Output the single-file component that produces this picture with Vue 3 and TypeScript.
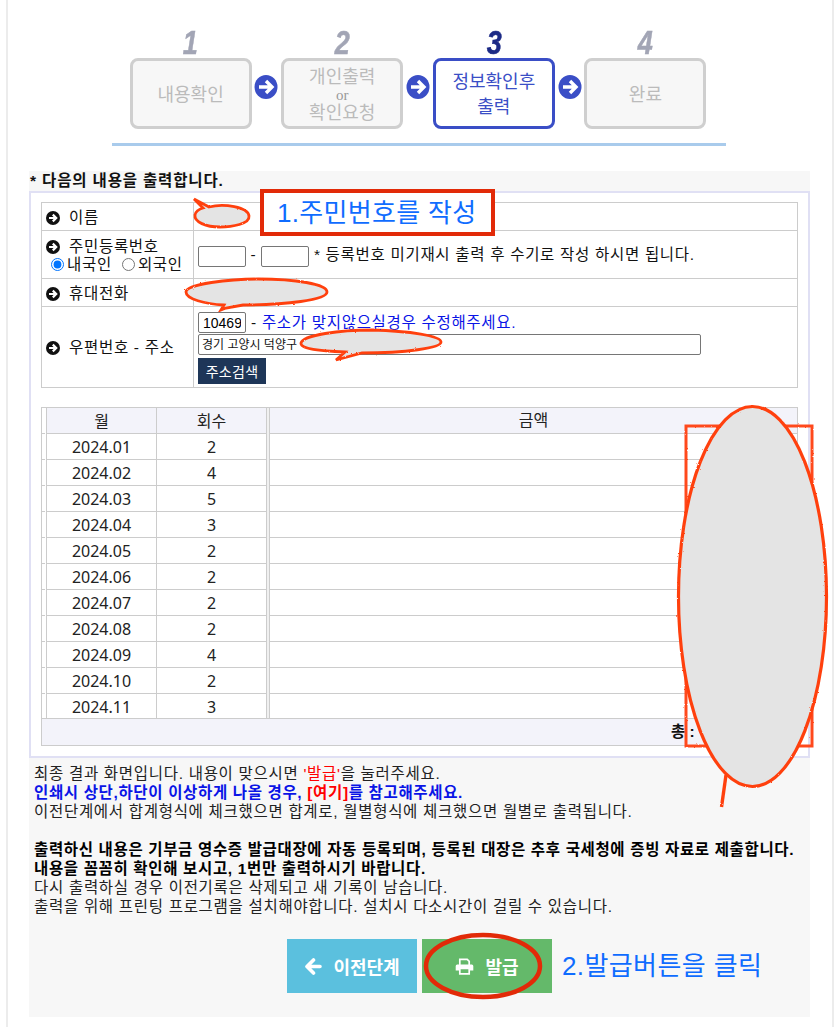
<script setup lang="ts">
const steps = [
  { n: '1', lines: ['내용확인'], cur: false },
  { n: '2', lines: ['개인출력', 'or', '확인요청'], cur: false },
  { n: '3', lines: ['정보확인후', '출력'], cur: true },
  { n: '4', lines: ['완료'], cur: false },
]
const rows = [
  ['2024.01', 2], ['2024.02', 4], ['2024.03', 5], ['2024.04', 3], ['2024.05', 2], ['2024.06', 2],
  ['2024.07', 2], ['2024.08', 2], ['2024.09', 4], ['2024.10', 2], ['2024.11', 3],
]
</script>

<template>
  <div class="page">
    <div class="stepper">
      <div class="steps">
        <template v-for="(s, i) in steps" :key="s.n">
          <div class="step">
            <div class="num" :class="{ curnum: s.cur }">{{ s.n }}</div>
            <div class="box" :class="{ cur: s.cur }">
              <span v-for="l in s.lines" :key="l" :class="{ or: l === 'or' }">{{ l }}</span>
            </div>
          </div>
          <svg v-if="i < 3" class="arrow" viewBox="0 0 24 24" width="24" height="24">
            <ellipse cx="12" cy="12" rx="11.5" ry="12" fill="#3a4ec6" />
            <path d="M5 12h12M12 6l6 6-6 6" fill="none" stroke="#fff" stroke-width="3.4" />
          </svg>
        </template>
      </div>
      <div class="rule"></div>
    </div>

    <div class="panel">
      <div class="head">* 다음의 내용을 출력합니다.</div>
      <div class="frame">
        <table class="form">
          <tbody>
            <tr class="r1">
              <th><span class="bul"><svg viewBox="0 0 14 14"><circle cx="7" cy="7" r="7" fill="#111" /><path d="M3 7h7M6.8 3.6 10.2 7 6.8 10.4" stroke="#fff" stroke-width="2.2" fill="none" /></svg></span>이름</th>
              <td></td>
            </tr>
            <tr class="r2">
              <th>
                <span class="bul"><svg viewBox="0 0 14 14"><circle cx="7" cy="7" r="7" fill="#111" /><path d="M3 7h7M6.8 3.6 10.2 7 6.8 10.4" stroke="#fff" stroke-width="2.2" fill="none" /></svg></span>주민등록번호
                <div class="radios">
                  <label><input type="radio" name="k" checked />내국인</label>
                  <label><input type="radio" name="k" />외국인</label>
                </div>
              </th>
              <td class="idcell">
                <input class="idbox" type="text" />
                <span class="dash">-</span>
                <input class="idbox" type="text" />
                <span class="note">* 등록번호 미기재시 출력 후 수기로 작성 하시면 됩니다.</span>
              </td>
            </tr>
            <tr class="r1">
              <th><span class="bul"><svg viewBox="0 0 14 14"><circle cx="7" cy="7" r="7" fill="#111" /><path d="M3 7h7M6.8 3.6 10.2 7 6.8 10.4" stroke="#fff" stroke-width="2.2" fill="none" /></svg></span>휴대전화</th>
              <td></td>
            </tr>
            <tr class="r4">
              <th><span class="bul"><svg viewBox="0 0 14 14"><circle cx="7" cy="7" r="7" fill="#111" /><path d="M3 7h7M6.8 3.6 10.2 7 6.8 10.4" stroke="#fff" stroke-width="2.2" fill="none" /></svg></span>우편번호 - 주소</th>
              <td class="addr">
                <div class="zipline">
                  <input class="zip" type="text" value="10469" />
                  <span class="ziptext">- <span class="blue">주소가 맞지않으실경우 수정해주세요.</span></span>
                </div>
                <input class="addrbox" type="text" value="경기 고양시 덕양구" />
                <button class="search">주소검색</button>
              </td>
            </tr>
          </tbody>
        </table>

        <div class="grid">
          <div class="gridbody">
            <div class="left">
              <table class="months">
                <thead><tr><th class="gut"></th><th class="c1">월</th><th class="c2">회수</th></tr></thead>
                <tbody>
                  <tr v-for="r in rows" :key="r[0]"><td class="gut"></td><td>{{ r[0] }}</td><td>{{ r[1] }}</td></tr>
                </tbody>
              </table>
            </div>
            <div class="right">
              <div class="righthead">금액</div>
              <div v-for="r in rows" :key="r[0]" class="rightrow"></div>
            </div>
          </div>
          <div class="total">총 :</div>
        </div>
      </div>

      <div class="notes">
        <p>최종 결과 화면입니다. 내용이 맞으시면 <span class="red">'발급'</span>을 눌러주세요.</p>
        <p class="strongblue">인쇄시 상단,하단이 이상하게 나올 경우, <span class="red">[여기]</span>를 참고해주세요.</p>
        <p>이전단계에서 합계형식에 체크했으면 합계로, 월별형식에 체크했으면 월별로 출력됩니다.</p>
        <p class="gap"><b>출력하신 내용은 기부금 영수증 발급대장에 자동 등록되며, 등록된 대장은 추후 국세청에 증빙 자료로 제출합니다.</b></p>
        <p><b>내용을 꼼꼼히 확인해 보시고, 1번만 출력하시기 바랍니다.</b></p>
        <p>다시 출력하실 경우 이전기록은 삭제되고 새 기록이 남습니다.</p>
        <p>출력을 위해 프린팅 프로그램을 설치해야합니다. 설치시 다소시간이 걸릴 수 있습니다.</p>
      </div>

      <div class="actions">
        <button class="btn prev">
          <svg viewBox="0 0 18 17" width="18" height="17"><path d="M9.5 2 3 8.5 9.5 15M3.5 8.5H16" fill="none" stroke="#fff" stroke-width="3.6" stroke-linecap="round" stroke-linejoin="round" /></svg>
          이전단계
        </button>
        <button class="btn issue">
          <svg viewBox="0 0 19 17" width="19" height="17">
            <path d="M4.8 7V1.3h7.4l2 2V7" fill="none" stroke="#fff" stroke-width="1.7" />
            <path d="M2.2 6.5h14.6a1.5 1.5 0 0 1 1.5 1.5v4.5H15V10H4v2.5H.7V8a1.5 1.5 0 0 1 1.5-1.5z" fill="#fff" />
            <path d="M4.8 10.5h9.4v5.3H4.8z" fill="none" stroke="#fff" stroke-width="1.7" />
          </svg>
          발급
        </button>
        <span class="hint2">2.발급버튼을 클릭</span>
      </div>
    </div>

    <!-- Annotations drawn over the screenshot -->
    <div class="callout1">1.주민번호를 작성</div>
    <svg class="marks" viewBox="0 0 835 1027" width="835" height="1027">
      <defs>
        <filter id="rough" x="-5%" y="-5%" width="110%" height="110%">
          <feTurbulence type="fractalNoise" baseFrequency="0.45" numOctaves="2" seed="4" />
          <feDisplacementMap in="SourceGraphic" scale="2" />
        </filter>
      </defs>
      <g filter="url(#rough)">
        <g stroke="#ff4010" stroke-width="2.8" fill="#e4e4e4">
          <path d="M194 199 L209 207 C224 203 248 207 249 216 C250 224 232 227 220 227 C206 227 194 222 195 215 C195 212 199 209 203 208 Z" />
          <path d="M186 292 C186 284 230 279 258 279 C295 279 327 284 327 292 C327 300 285 305 243 305 L226 308 L221 310 L224 305 C205 304 186 299 186 292 Z" />
          <path d="M301 343 C303 335 340 330 372 330 C410 331 441 336 441 342 C441 348 405 353 362 353 L336 360 L345 352 C320 351 300 349 301 343 Z" />
        </g>
        <g fill="none" stroke="#ff4a1f" stroke-width="3">
          <rect x="686" y="426" width="126" height="320" />
        </g>
        <ellipse cx="752.5" cy="596.5" rx="74" ry="190" fill="#e4e4e4" stroke="#ff4010" stroke-width="3.2" />
        <path d="M726 775 L721.5 807" fill="none" stroke="#ff4010" stroke-width="3.4" />
      </g>
      <ellipse cx="483" cy="966" rx="57" ry="31" fill="none" stroke="#e22a08" stroke-width="4.5" />
    </svg>
  </div>
</template>

<style>
body { margin: 0; background: #fff; }
</style>

<style scoped>
.page {
  position: relative;
  width: 835px;
  height: 1027px;
  overflow: hidden;
  font-family: "Liberation Sans", "Noto Sans CJK KR", sans-serif;
  font-size: 15.5px;
  letter-spacing: .7px;
  color: #111;
  display: flex;
  flex-direction: column;
  align-items: center;
  background:
    linear-gradient(#ececec, #ececec) 6px 0 / 2px 100% no-repeat,
    linear-gradient(#ececec, #ececec) 832px 0 / 2px 100% no-repeat,
    #fff;
}
.stepper { width: 614px; margin: 28px 0 0 3px; display: flex; flex-direction: column; align-items: center; letter-spacing: 0; }
.steps { display: flex; align-items: flex-start; height: 99px; margin-left: -2px; }
.step { width: 122px; display: flex; flex-direction: column; align-items: center; }
.num {
  height: 30px; font: italic 700 33px/30px "Liberation Sans", sans-serif;
  color: #a2a5b5; transform: scaleX(.82); -webkit-text-stroke: .5px currentColor;
}
.curnum { color: #1c2a86; }
.box {
  width: 122px; height: 71px; box-sizing: border-box; border: 3px solid #cfcfcf; border-radius: 8px; padding-top: 2px;
  background: #f7f7f7; color: #bbb; font-size: 18px; line-height: 22px;
  display: flex; flex-direction: column; align-items: center; justify-content: center;
}
.box .or { font: 400 15px/14px "Liberation Serif", serif; color: #999; }
.box.cur { background: #fff; border-color: #3a4ec6; color: #3a4ec6; line-height: 25px; }
.arrow { margin: 47px 2.8px 0; flex: none; width: 24px; height: 24px; }
.rule { width: 614px; height: 3px; background: #a9cbec; margin-top: 16px; }

.panel {
  width: 781px; height: 846px; margin: 25px 0 0 4px; background: #f7f7f7; display: flex; flex-direction: column;
}
.head { height: 20px; font-weight: 700; line-height: 20px; padding-left: 1px; letter-spacing: .85px; }
.frame {
  box-sizing: border-box; width: 781px; height: 567px; border: 2px solid #e0e0f4; background: #fff;
  padding: 9px 10px 0 10px;
}
.form { border-collapse: collapse; width: 757px; table-layout: fixed; background: #fff; }
.form th, .form td { border: 1px solid #ccc; padding: 0; }
.form th { width: 147px; text-align: left; font-weight: 400; padding: 0 0 2px 4px; }
.r1 { height: 28px; }
.r2 { height: 48px; }
.r4 { height: 81px; }
.bul { display: inline-block; width: 14px; height: 14px; vertical-align: -2px; margin-right: 9px; }
.bul svg { display: block; width: 14px; height: 14px; }
.radios { display: flex; gap: 10px; padding-left: 5px; line-height: 18px; }
.radios label { display: flex; align-items: center; }
.radios input { margin: 0 3px 0 0; width: 13px; height: 13px; }
.idcell { padding-left: 4px !important; }
.idbox { box-sizing: border-box; width: 48px; height: 21px; border: 1px solid #767676; border-radius: 2px; padding: 0; vertical-align: middle; background: #fff; }
.dash { margin: 0 4.5px; }
.note { margin-left: 5px; }
.addr { padding: 5px 0 0 4px !important; vertical-align: top; }
.zipline { display: flex; align-items: center; gap: 5px; height: 21px; }
.ziptext { margin-bottom: 3px; }
.zip { box-sizing: border-box; width: 48px; height: 21px; border: 1px solid #767676; border-radius: 2px; padding: 0 4px; font: 14px "Liberation Sans", sans-serif; letter-spacing: 0; }
.blue { color: #0a14e6; }
.addrbox { display: block; box-sizing: border-box; width: 503px; height: 21px; margin-top: 1px; border: 1px solid #767676; border-radius: 2px; padding: 0 3px 3px; font: 12px "Liberation Sans", "Noto Sans CJK KR", sans-serif; letter-spacing: 0; color: #111; }
.search { display: block; height: 26px; width: 68px; margin-top: 3px; padding: 0; border: 0; background: #1e3658; color: #fff; font: 14px "Liberation Sans", "Noto Sans CJK KR", sans-serif; letter-spacing: .3px; }

.grid { box-sizing: border-box; width: 757px; height: 339px; margin-top: 19px; border: 1px solid #ccc; background: #f3f3fa; display: flex; flex-direction: column; }
.gridbody { display: flex; height: 311px; overflow: hidden; background: #fff; }
.left { width: 227px; flex: none; background: #f0f0f0; }
.months { border-collapse: collapse; table-layout: fixed; width: 223px; background: #fff; font-family: "Noto Sans", "Noto Sans CJK KR", sans-serif; font-size: 16px; letter-spacing: 0; color: #222; }
.months th, .months td { border: 1px solid #ccc; height: 25px; padding: 0; text-align: center; font-weight: 400; line-height: 20px; }
.months th { background: #f3f3fa; border-top: 0; }
.months .gut { width: 4px; border: 0; border-right: 1px solid #ccc; background: linear-gradient(#ccc, #ccc) left bottom / 3px 1px no-repeat #fff; }
.c1 { width: 109px; }
.c2 { width: 109px; }
.right { flex: 1; border-left: 1px solid #ccc; }
.righthead { height: 25px; line-height: 25px; text-align: center; background: #f3f3fa; border-bottom: 1px solid #ccc; font-family: "Noto Sans", "Noto Sans CJK KR", sans-serif; font-size: 16px; letter-spacing: 0; color: #222; }
.rightrow { height: 25px; border-bottom: 1px solid #ccc; }
.total { height: 26px; line-height: 26px; border-top: 1px solid #ccc; font-weight: 700; padding-left: 629px; letter-spacing: 0; }

.notes { margin: 6px 0 0 5px; line-height: 19px; color: #222; }
.notes p { margin: 0; white-space: nowrap; }
.notes b { color: #000; letter-spacing: .65px; }
.red { color: #f00; }
.strongblue { color: #0a14e6; font-weight: 700; letter-spacing: .65px; }
.gap { margin-top: 19px !important; }

.actions { display: flex; align-items: center; margin: 23px 0 0 258px; gap: 5px; }
.btn {
  height: 54px; border: 0; color: #fff; font: 700 18px "Liberation Sans", "Noto Sans CJK KR", sans-serif; display: flex; align-items: center; justify-content: center; gap: 11px; padding: 0;
}
.prev { width: 130px; background: #5bc0de; }
.issue { width: 130px; background: #64b96a; }
.hint2 { margin-left: 5px; color: #0f6cff; font-size: 26px; line-height: 30px; letter-spacing: .4px; }

.callout1 {
  position: absolute; left: 260px; top: 189px; box-sizing: border-box; width: 235px; height: 47px;
  border: 4.5px solid #e22a08; background: #fff; color: #0f6cff; font-size: 26px; line-height: 40px; padding-left: 13px; white-space: nowrap; letter-spacing: .3px;
}
.marks { position: absolute; left: 0; top: 0; pointer-events: none; }
</style>
